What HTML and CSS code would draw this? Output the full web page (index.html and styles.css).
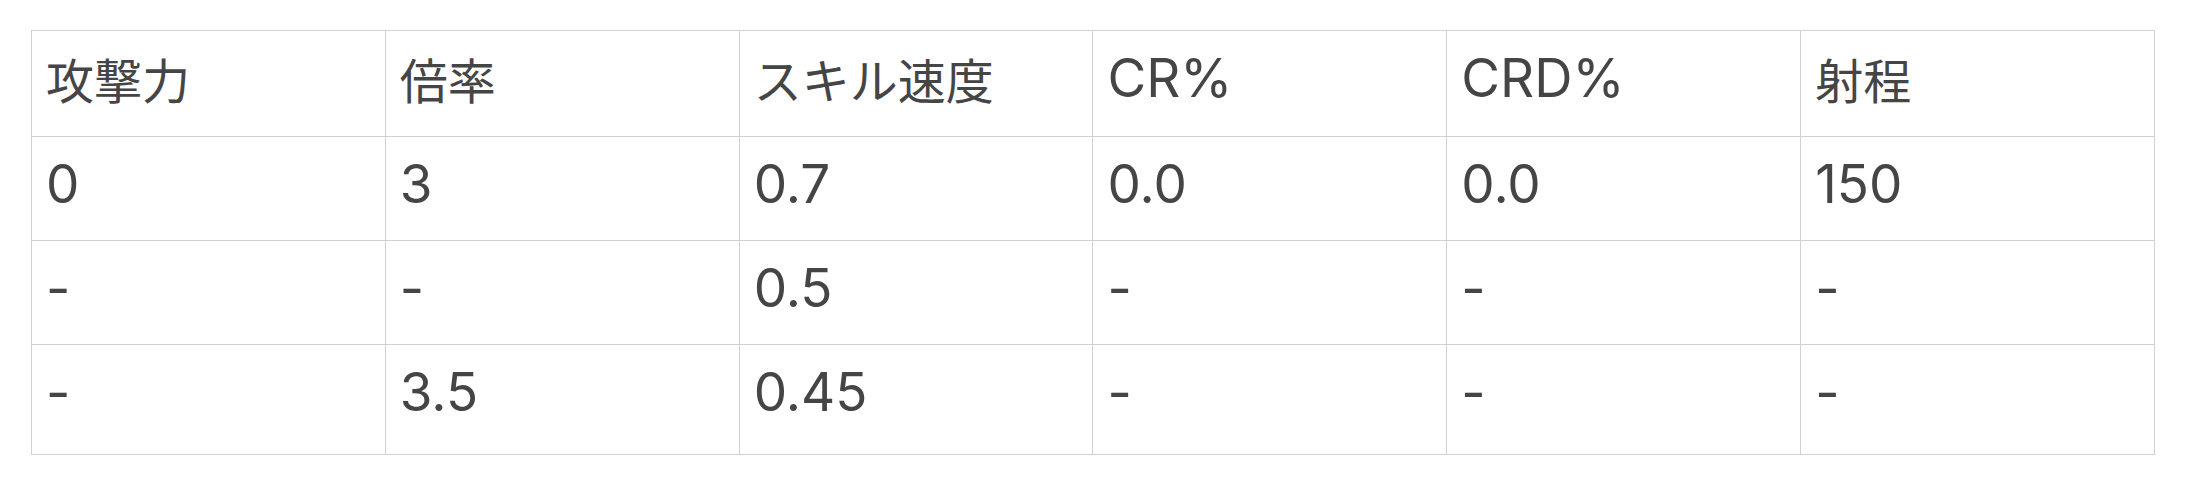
FILE: index.html
```html
<!DOCTYPE html>
<html lang="ja">
<head>
<meta charset="utf-8">
<title>Table</title>
<link rel="stylesheet" href="styles.css">
</head>
<body>
<div class="page">
  <table class="stats">
    <thead>
      <tr>
        <th><span class="ja">攻撃力</span></th>
        <th><span class="ja">倍率</span></th>
        <th><span class="ja">スキル速度</span></th>
        <th>CR%</th>
        <th>CRD%</th>
        <th><span class="ja">射程</span></th>
      </tr>
    </thead>
    <tbody>
      <tr>
        <td>0</td>
        <td>3</td>
        <td>0.7</td>
        <td>0.0</td>
        <td>0.0</td>
        <td>150</td>
      </tr>
      <tr>
        <td>-</td>
        <td>-</td>
        <td>0.5</td>
        <td>-</td>
        <td>-</td>
        <td>-</td>
      </tr>
      <tr class="last">
        <td>-</td>
        <td>3.5</td>
        <td>0.45</td>
        <td>-</td>
        <td>-</td>
        <td>-</td>
      </tr>
    </tbody>
  </table>
</div>
</body>
</html>
```

FILE: styles.css
```css
html, body {
  margin: 0;
  padding: 0;
  background: #ffffff;
}

.page {
  padding: 30px 0 0 31px;
}

.stats {
  border-collapse: collapse;
  table-layout: fixed;
  width: 2124px;
  font-family: Inter, "Noto Sans CJK JP", sans-serif;
  font-size: 53px;
  line-height: 76px;
  color: #454545;
}

.stats th,
.stats td {
  border: 1px solid #d2d2d2;
  padding: 9px 14px 18px;
  text-align: left;
  font-weight: 400;
  vertical-align: top;
}

.stats .ja {
  font-family: "Noto Sans CJK JP", sans-serif;
  font-size: 48px;
}

.stats tr.last td {
  padding-bottom: 24px;
}
```
